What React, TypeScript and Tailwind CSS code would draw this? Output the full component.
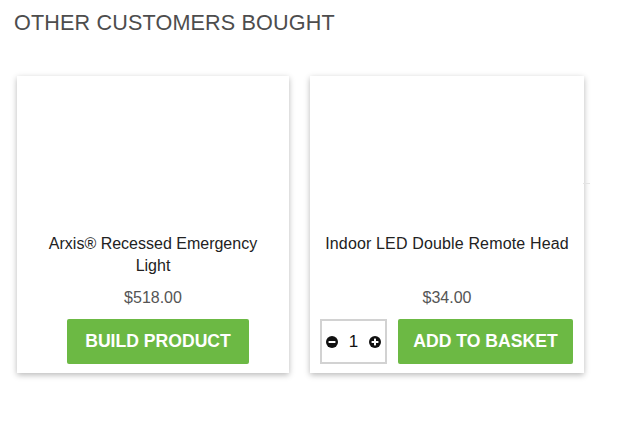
import React from "react";

function QtyIcon({ plus }: { plus?: boolean }) {
  return (
    <svg width="12" height="12" viewBox="0 0 12 12">
      <circle cx="6" cy="6" r="6" fill="#111" />
      <rect x="2.6" y="5" width="6.8" height="2" fill="#fff" />
      {plus && <rect x="5" y="2.6" width="2" height="6.8" fill="#fff" />}
    </svg>
  );
}

export default function App() {
  return (
    <div className="w-[636px] h-[443px] bg-white font-['Liberation_Sans',Arial,sans-serif] relative">
      <h2 className="pl-[14px] pt-[10px] text-[21.6px] leading-[26px] text-[#4d4d4d] tracking-[0.15px]">
        OTHER CUSTOMERS BOUGHT
      </h2>
      <div className="flex gap-[21px] pl-[17px] mt-[40px]">
        <div className="w-[272px] h-[297px] bg-white shadow-[0_2px_6px_rgba(0,0,0,0.28)] flex flex-col">
          <div className="h-[157px]" />
          <div className="h-[44px] text-[16px] leading-[22px] text-[#222] text-center px-[28px]">
            Arxis® Recessed Emergency Light
          </div>
          <div className="mt-[10px] text-[16px] leading-[22px] text-[#555] text-center">$518.00</div>
          <div className="mt-[10px] flex justify-center pl-[10px]">
            <button className="w-[182px] h-[45px] bg-[#6cb944] rounded-[2px] text-white font-bold text-[17.6px]">
              BUILD PRODUCT
            </button>
          </div>
        </div>
        <div className="relative w-[274px] h-[297px] bg-white shadow-[0_2px_6px_rgba(0,0,0,0.28)] flex flex-col">
          <div className="absolute right-[-6px] top-[107px] w-[7px] h-[1px] bg-[#e4e4e4]" />
          <div className="h-[157px]" />
          <div className="h-[44px] text-[16px] leading-[22px] text-[#222] text-center px-[6px] tracking-[0.15px]">
            Indoor LED Double Remote Head
          </div>
          <div className="mt-[10px] text-[16px] leading-[22px] text-[#555] text-center">$34.00</div>
          <div className="mt-[10px] flex px-[10px] gap-[11px]">
            <div className="w-[67px] h-[45px] border-2 border-[#d2d2d2] flex items-center justify-between px-[4px]">
              <QtyIcon />
              <span className="text-[17px] text-[#111]">1</span>
              <QtyIcon plus />
            </div>
            <button className="w-[175px] h-[45px] bg-[#6cb944] rounded-[2px] text-white font-bold text-[17.6px]">
              ADD TO BASKET
            </button>
          </div>
        </div>
      </div>
    </div>
  );
}
